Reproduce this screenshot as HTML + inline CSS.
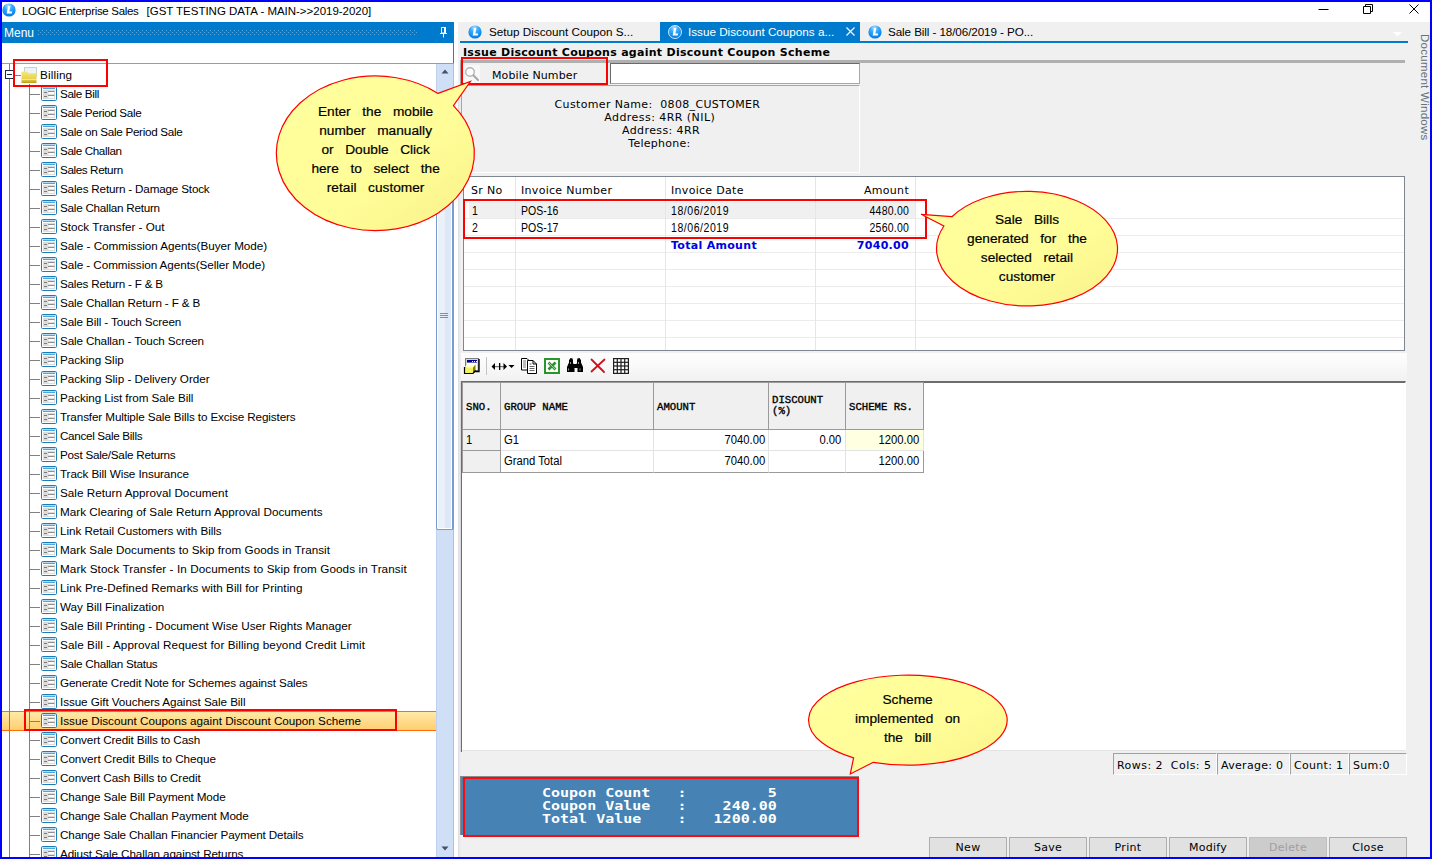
<!DOCTYPE html>
<html lang="en"><head><meta charset="utf-8"><title>LOGIC Enterprise Sales</title>
<style>
*{box-sizing:border-box}
html,body{margin:0;padding:0}
body{width:1432px;height:859px;position:relative;overflow:hidden;background:#f0f0f0;font-family:"Liberation Sans",sans-serif;font-size:11.5px;color:#000}
.abs{position:absolute}
.seg{font-family:"Liberation Sans",sans-serif;font-size:11.5px}
.ver{font-family:"DejaVu Sans","Liberation Sans",sans-serif;font-size:11px;letter-spacing:.3px;white-space:pre}
.nar{font-family:"Liberation Sans",sans-serif;font-size:12.5px;display:inline-block;transform:scaleX(.84);white-space:pre}
#frame{position:absolute;left:0;top:0;width:1432px;height:859px;border:2px solid #0000ff;z-index:50;pointer-events:none}
#title{position:absolute;left:2px;top:2px;width:1428px;height:20px;background:#fff}
#title .t{position:absolute;left:20px;top:0;line-height:19px;font-size:11.5px;white-space:pre}
#mhead{position:absolute;left:2px;top:22px;width:452px;height:21px;background:#007acc;color:#fff}
#mhead .t{position:absolute;left:2px;top:1px;line-height:21px;font-size:12px}
#mhead .dots{position:absolute;left:36px;top:8px;width:380px;height:6px;
 background-image:radial-gradient(circle at 0.5px 0.5px,#59a7dd 0.6px,transparent 0.8px),radial-gradient(circle at 2.5px 2.5px,#59a7dd 0.6px,transparent 0.8px);background-size:4px 4px}
#mband{position:absolute;left:2px;top:43px;width:452px;height:20px;background:#fff;border-right:1px solid #6d6d6d}
#treebg{position:absolute;left:2px;top:63px;width:452px;height:794px;background:#fff;border-top:1px solid #7da2ce}
#tree{position:absolute;left:0;top:0;width:436px;height:857px;overflow:hidden}
.ti{position:absolute;left:2px;width:434px;height:19px;line-height:20px;white-space:pre}
.ti span{position:absolute;left:58px;top:0;font-size:11.7px}
.ti .ic{position:absolute;left:39px;top:2px}
.ti .hl{position:absolute;left:27px;top:10px;width:11px;height:1px;background:#808080}
.ti.sel{height:20px;background:linear-gradient(#ffeaa6,#ffdb8c 50%,#ffcf6e);border-top:1px solid #ff6e0a;border-bottom:1px solid #ff6e0a}
.ti.sel span,.ti.sel .ic,.ti.sel .hl{margin-top:-1px}
.vl{position:absolute;width:1px;background:#808080;z-index:2}
.red{position:absolute;border:2px solid #ff0000;z-index:20}
#vsb{position:absolute;left:436px;top:64px;width:18px;height:793px;background:#cfdff5;border-left:1px solid #bfd1ee;border-right:1px solid #a9c1e6}
#vsb .th{position:absolute;left:-1px;top:38px;width:18px;height:428px;border:1px solid #7a9bcb;border-right-width:2px;border-radius:2px;box-shadow:inset 0 0 0 1px #fff;background:linear-gradient(90deg,#eaf1fb 0,#eaf1fb 50%,#dce8f7 50%,#dce8f7)}
#split{position:absolute;left:454px;top:22px;width:4px;height:835px;background:#fff}
/* right */
#tabs{position:absolute;left:458px;top:22px;width:972px;height:19px}
.tab{position:absolute;top:0;height:19px;line-height:20px;font-size:11.7px;white-space:pre}
.tab.act{background:#007acc;color:#fff}
#tline{position:absolute;left:460px;top:41px;width:948px;height:2px;background:#007acc}
#hd{position:absolute;left:463px;top:45px;line-height:15px;font-weight:bold;font-family:"DejaVu Sans",sans-serif;font-size:11px;letter-spacing:.28px;white-space:pre}
#gband{position:absolute;left:460px;top:60px;width:945px;height:3px;background:#b0b0b0}
.cal text{font-family:"Liberation Sans",sans-serif;font-size:13.7px;word-spacing:7.8px;text-anchor:middle;fill:#000;stroke:#000;stroke-width:.2px}
.btn{position:absolute;top:837px;width:78px;height:22px;background:#e1e1e1;border:1px solid #adadad;text-align:center;line-height:19px}
.btn.dis{color:#a0a0a0;background:#cccccc;border-color:#bfbfbf}
.st{position:absolute;top:753px;height:22px;border:1px solid;border-color:#a0a0a0 #fff #fff #a0a0a0;line-height:23px;padding-left:3px}
.gh{position:absolute;background:#f0f0f0;border-right:1px solid #9a9a9a;border-bottom:1px solid #9a9a9a;font:normal 10.67px "Liberation Mono",monospace;-webkit-text-stroke:.35px #000;white-space:pre;line-height:11px}
.gc{position:absolute;background:#fff;border-right:1px solid #e3e3e3;border-bottom:1px solid #e3e3e3;font-size:12.5px;line-height:20px;white-space:pre}
.gc.r{text-align:right}
.gc span{display:inline-block;transform:scaleX(.9)}

</style></head>
<body>
<svg width="0" height="0" style="position:absolute">
<defs>
<radialGradient id="lg" cx="0.45" cy="0.2" r="0.85"><stop offset="0" stop-color="#b4e2ff"/><stop offset="0.35" stop-color="#3aa9ff"/><stop offset="0.7" stop-color="#0f90f2"/><stop offset="1" stop-color="#0a6fd0"/></radialGradient>
<linearGradient id="fg" x1="0" y1="0" x2="0" y2="1"><stop offset="0" stop-color="#f7ea7a"/><stop offset="0.7" stop-color="#e6cf4a"/><stop offset="1" stop-color="#b89b1e"/></linearGradient>
<symbol id="logo" viewBox="0 0 14 14"><circle cx="7" cy="7" r="6.6" fill="url(#lg)"/><path d="M6 2.900 L8.300 2.900 L7.400 8.400 L10.200 8.400 L9.900 10.400 L4.700 10.400 Z" fill="#fff"/></symbol>
<symbol id="doc" viewBox="0 0 16 15"><rect x="0.5" y="0.5" width="15" height="14" rx="1.1" fill="#fff" stroke="#1b7db8"/><rect x="1" y="1" width="14" height="1" fill="#b5daf2"/><rect x="2" y="2" width="12" height="1" fill="#4da6dc"/><rect x="2" y="4" width="12" height="9" fill="#dcdcdc"/><rect x="3" y="6" width="3" height="1" fill="#7a7a7a"/><rect x="3" y="10" width="3" height="1" fill="#7a7a7a"/><rect x="7" y="5" width="6.500" height="1" fill="#8e8e8e"/><rect x="7.500" y="6" width="5.500" height="2" fill="#fff"/><rect x="7" y="9" width="6.500" height="1" fill="#8e8e8e"/><rect x="7.500" y="10" width="5.500" height="2" fill="#fff"/></symbol>
</defs></svg>
<div id="title">
 <svg class="abs" style="left:.3px;top:1px" width="14" height="14"><use href="#logo"/></svg>
 <div class="t" style="letter-spacing:-.31px">LOGIC Enterprise Sales  </div><div class="t" style="left:144.6px;letter-spacing:-.02px">[GST TESTING DATA - MAIN-&gt;&gt;2019-2020]</div>
 <svg class="abs" style="left:1310px;top:0" width="118" height="20" fill="none" stroke="#000" stroke-width="1">
  <path d="M6.5 7.5h10"/>
  <path d="M51.5 4.5h7v7h-7z M53.5 4.5v-2h7v7h-2" />
  <path d="M97.5 2.5l9 9M106.5 2.5l-9 9"/>
 </svg>
</div>
<div id="mhead"><div class="t">Menu</div><div class="dots"></div>
 <svg class="abs" style="left:438px;top:5px" width="8" height="11" fill="none" stroke="#fff" stroke-width="1"><path d="M1.500 0.500h4v5.500h-4z M0 6.500h7 M3.500 7v3.500"/><path d="M5 0v6.500" stroke-width="2"/></svg>
</div>
<div id="mband"></div>

<div id="treebg"></div>
<div id="tree">
<div class="vl" style="left:9px;top:64px;height:6px"></div>
<div class="vl" style="left:9px;top:79px;height:780px"></div>
<div class="vl" style="left:29px;top:84px;height:775px"></div>
<div class="abs" style="left:13px;top:75px;width:8px;height:1px;background:#808080"></div>
<div class="abs" style="left:5px;top:70px;width:9px;height:9px;border:1px solid #1c2a4a;background:#fff"></div>
<div class="abs" style="left:7px;top:74px;width:5px;height:1px;background:#1c2a4a"></div>
<svg class="abs" style="left:21px;top:67px" width="16" height="17"><rect x="3.5" y="0.5" width="12" height="9" fill="#eef3f7" stroke="#c9d2c8"/><path d="M0.5 16V5.5q0-1 1-1h4.2q.8 0 1.2 .7l.6 1h8v9.8z" fill="url(#fg)"/><rect x="0.5" y="12" width="15" height="1" fill="#f6ec9a" opacity=".8"/></svg>
<div class="abs seg" style="left:40px;top:65px;line-height:20px;font-size:11.7px;letter-spacing:.15px">Billing</div>
<div class="ti" style="top:84px"><i class="hl"></i><svg class="ic" width="16" height="15"><use href="#doc"/></svg><span style="letter-spacing:-0.354px">Sale Bill</span></div>
<div class="ti" style="top:103px"><i class="hl"></i><svg class="ic" width="16" height="15"><use href="#doc"/></svg><span style="letter-spacing:-0.359px">Sale Period Sale</span></div>
<div class="ti" style="top:122px"><i class="hl"></i><svg class="ic" width="16" height="15"><use href="#doc"/></svg><span style="letter-spacing:-0.315px">Sale on Sale Period Sale</span></div>
<div class="ti" style="top:141px"><i class="hl"></i><svg class="ic" width="16" height="15"><use href="#doc"/></svg><span style="letter-spacing:-0.389px">Sale Challan</span></div>
<div class="ti" style="top:160px"><i class="hl"></i><svg class="ic" width="16" height="15"><use href="#doc"/></svg><span style="letter-spacing:-0.398px">Sales Return</span></div>
<div class="ti" style="top:179px"><i class="hl"></i><svg class="ic" width="16" height="15"><use href="#doc"/></svg><span style="letter-spacing:-0.189px">Sales Return - Damage Stock</span></div>
<div class="ti" style="top:198px"><i class="hl"></i><svg class="ic" width="16" height="15"><use href="#doc"/></svg><span style="letter-spacing:-0.251px">Sale Challan Return</span></div>
<div class="ti" style="top:217px"><i class="hl"></i><svg class="ic" width="16" height="15"><use href="#doc"/></svg><span style="letter-spacing:-0.004px">Stock Transfer - Out</span></div>
<div class="ti" style="top:236px"><i class="hl"></i><svg class="ic" width="16" height="15"><use href="#doc"/></svg><span style="letter-spacing:-0.019px">Sale - Commission Agents(Buyer Mode)</span></div>
<div class="ti" style="top:255px"><i class="hl"></i><svg class="ic" width="16" height="15"><use href="#doc"/></svg><span style="letter-spacing:-0.059px">Sale - Commission Agents(Seller Mode)</span></div>
<div class="ti" style="top:274px"><i class="hl"></i><svg class="ic" width="16" height="15"><use href="#doc"/></svg><span style="letter-spacing:-0.215px">Sales Return - F &amp; B</span></div>
<div class="ti" style="top:293px"><i class="hl"></i><svg class="ic" width="16" height="15"><use href="#doc"/></svg><span style="letter-spacing:-0.151px">Sale Challan Return - F &amp; B</span></div>
<div class="ti" style="top:312px"><i class="hl"></i><svg class="ic" width="16" height="15"><use href="#doc"/></svg><span style="letter-spacing:-0.112px">Sale Bill - Touch Screen</span></div>
<div class="ti" style="top:331px"><i class="hl"></i><svg class="ic" width="16" height="15"><use href="#doc"/></svg><span style="letter-spacing:-0.147px">Sale Challan - Touch Screen</span></div>
<div class="ti" style="top:350px"><i class="hl"></i><svg class="ic" width="16" height="15"><use href="#doc"/></svg><span style="letter-spacing:-0.057px">Packing Slip</span></div>
<div class="ti" style="top:369px"><i class="hl"></i><svg class="ic" width="16" height="15"><use href="#doc"/></svg><span style="letter-spacing:-0.012px">Packing Slip - Delivery Order</span></div>
<div class="ti" style="top:388px"><i class="hl"></i><svg class="ic" width="16" height="15"><use href="#doc"/></svg><span style="letter-spacing:-0.07px">Packing List from Sale Bill</span></div>
<div class="ti" style="top:407px"><i class="hl"></i><svg class="ic" width="16" height="15"><use href="#doc"/></svg><span style="letter-spacing:-0.117px">Transfer Multiple Sale Bills to Excise Registers</span></div>
<div class="ti" style="top:426px"><i class="hl"></i><svg class="ic" width="16" height="15"><use href="#doc"/></svg><span style="letter-spacing:-0.325px">Cancel Sale Bills</span></div>
<div class="ti" style="top:445px"><i class="hl"></i><svg class="ic" width="16" height="15"><use href="#doc"/></svg><span style="letter-spacing:-0.245px">Post Sale/Sale Returns</span></div>
<div class="ti" style="top:464px"><i class="hl"></i><svg class="ic" width="16" height="15"><use href="#doc"/></svg><span style="letter-spacing:-0.105px">Track Bill Wise Insurance</span></div>
<div class="ti" style="top:483px"><i class="hl"></i><svg class="ic" width="16" height="15"><use href="#doc"/></svg><span style="letter-spacing:0.033px">Sale Return Approval Document</span></div>
<div class="ti" style="top:502px"><i class="hl"></i><svg class="ic" width="16" height="15"><use href="#doc"/></svg><span style="letter-spacing:0.02px">Mark Clearing of Sale Return Approval Documents</span></div>
<div class="ti" style="top:521px"><i class="hl"></i><svg class="ic" width="16" height="15"><use href="#doc"/></svg><span style="letter-spacing:-0.043px">Link Retail Customers with Bills</span></div>
<div class="ti" style="top:540px"><i class="hl"></i><svg class="ic" width="16" height="15"><use href="#doc"/></svg><span style="letter-spacing:0.022px">Mark Sale Documents to Skip from Goods in Transit</span></div>
<div class="ti" style="top:559px"><i class="hl"></i><svg class="ic" width="16" height="15"><use href="#doc"/></svg><span style="letter-spacing:0.09px">Mark Stock Transfer - In Documents to Skip from Goods in Transit</span></div>
<div class="ti" style="top:578px"><i class="hl"></i><svg class="ic" width="16" height="15"><use href="#doc"/></svg><span style="letter-spacing:0.059px">Link Pre-Defined Remarks with Bill for Printing</span></div>
<div class="ti" style="top:597px"><i class="hl"></i><svg class="ic" width="16" height="15"><use href="#doc"/></svg><span style="letter-spacing:0.003px">Way Bill Finalization</span></div>
<div class="ti" style="top:616px"><i class="hl"></i><svg class="ic" width="16" height="15"><use href="#doc"/></svg><span style="letter-spacing:0.001px">Sale Bill Printing - Document Wise User Rights Manager</span></div>
<div class="ti" style="top:635px"><i class="hl"></i><svg class="ic" width="16" height="15"><use href="#doc"/></svg><span style="letter-spacing:0.081px">Sale Bill - Approval Request for Billing beyond Credit Limit</span></div>
<div class="ti" style="top:654px"><i class="hl"></i><svg class="ic" width="16" height="15"><use href="#doc"/></svg><span style="letter-spacing:-0.275px">Sale Challan Status</span></div>
<div class="ti" style="top:673px"><i class="hl"></i><svg class="ic" width="16" height="15"><use href="#doc"/></svg><span style="letter-spacing:-0.126px">Generate Credit Note for Schemes against Sales</span></div>
<div class="ti" style="top:692px"><i class="hl"></i><svg class="ic" width="16" height="15"><use href="#doc"/></svg><span style="letter-spacing:-0.081px">Issue Gift Vouchers Against Sale Bill</span></div>
<div class="ti sel" style="top:711px"><i class="hl"></i><svg class="ic" width="16" height="15"><use href="#doc"/></svg><span style="letter-spacing:0.004px">Issue Discount Coupons againt Discount Coupon Scheme</span></div>
<div class="ti" style="top:730px"><i class="hl"></i><svg class="ic" width="16" height="15"><use href="#doc"/></svg><span style="letter-spacing:-0.121px">Convert Credit Bills to Cash</span></div>
<div class="ti" style="top:749px"><i class="hl"></i><svg class="ic" width="16" height="15"><use href="#doc"/></svg><span style="letter-spacing:-0.045px">Convert Credit Bills to Cheque</span></div>
<div class="ti" style="top:768px"><i class="hl"></i><svg class="ic" width="16" height="15"><use href="#doc"/></svg><span style="letter-spacing:-0.106px">Convert Cash Bills to Credit</span></div>
<div class="ti" style="top:787px"><i class="hl"></i><svg class="ic" width="16" height="15"><use href="#doc"/></svg><span style="letter-spacing:-0.092px">Change Sale Bill Payment Mode</span></div>
<div class="ti" style="top:806px"><i class="hl"></i><svg class="ic" width="16" height="15"><use href="#doc"/></svg><span style="letter-spacing:-0.117px">Change Sale Challan Payment Mode</span></div>
<div class="ti" style="top:825px"><i class="hl"></i><svg class="ic" width="16" height="15"><use href="#doc"/></svg><span style="letter-spacing:-0.148px">Change Sale Challan Financier Payment Details</span></div>
<div class="ti" style="top:844px"><i class="hl"></i><svg class="ic" width="16" height="15"><use href="#doc"/></svg><span style="letter-spacing:-0.109px">Adjust Sale Challan against Returns</span></div>
</div>
<div class="red" style="left:13px;top:59px;width:95px;height:28px"></div>
<div class="red" style="left:24px;top:709px;width:373px;height:22px"></div>
<div id="vsb"><div class="th"></div>
<svg class="abs" style="left:4px;top:5px" width="9" height="5"><path d="M0.500 4.500L4 0.500L7.500 4.500z" fill="#45516b"/></svg>
<svg class="abs" style="left:4px;top:782px" width="9" height="5"><path d="M0.500 0.500L4 4.500L7.500 0.500z" fill="#45516b"/></svg>
<div class="abs" style="left:3px;top:249px;width:8px;height:1px;background:#6f8fc0;box-shadow:0 2px #6f8fc0,0 4px #6f8fc0"></div>
</div>
<div id="split"></div>
<div class="abs" style="left:458px;top:85px;width:3px;height:772px;background:linear-gradient(90deg,#dadae0,#e9e9ed 50%,#f0f0f0)"></div>
<!-- tabs -->
<div id="tabs">
 <div class="tab" style="left:0;width:202px"><svg class="abs" style="left:10px;top:3px" width="14" height="14"><use href="#logo"/></svg><span class="abs" style="left:31px">Setup Discount Coupon S...</span></div>
 <div class="tab act" style="left:202px;width:200px"><svg class="abs" style="left:8px;top:3px" width="14" height="14"><use href="#logo"/><circle cx="7" cy="7" r="6.5" fill="none" stroke="#fff" stroke-width=".8"/></svg><span class="abs" style="left:28px">Issue Discount Coupons a...</span>
  <svg class="abs" style="left:186px;top:5px" width="9" height="9" stroke="#fff" stroke-width="1.1" fill="none"><path d="M0.5 0.5l8 8M8.5 0.5l-8 8"/></svg></div>
 <div class="tab" style="left:402px;width:200px"><svg class="abs" style="left:8px;top:3px" width="14" height="14"><use href="#logo"/></svg><span class="abs" style="left:28px;letter-spacing:-.1px">Sale Bill - 18/06/2019 - PO...</span></div>
 <svg class="abs" style="left:935px;top:10px" width="9" height="5"><path d="M0 0h9L4.5 4.5z" fill="#fff"/></svg>
</div>
<div id="tline"></div>
<div class="abs" style="left:1419px;top:33px;width:12px;height:110px;overflow:visible"><div style="position:absolute;left:12px;top:1px;transform-origin:0 0;transform:rotate(90deg);white-space:pre;font-size:11.5px;letter-spacing:.27px;color:#66707e;line-height:12px">Document Windows</div></div>
<div id="hd">Issue Discount Coupons againt Discount Coupon Scheme</div>
<div id="gband"></div>
<!-- search row -->
<div class="abs" style="left:463px;top:65px;width:17px;height:18px;background:#f8f8f8"></div>
<svg class="abs" style="left:464px;top:66px" width="16" height="16" fill="none"><circle cx="6" cy="6" r="4.3" stroke="#b4b4b4" stroke-width="1.4" fill="#fdfdfd"/><path d="M9.3 9.3L14 14" stroke="#a8a8a8" stroke-width="2" stroke-linecap="round"/></svg>
<div class="abs ver" style="left:492px;top:69px;line-height:14px;letter-spacing:.12px">Mobile Number</div>
<div class="abs" style="left:610px;top:63px;width:250px;height:21px;background:#fff;border:1px solid;border-color:#6a6a6a #a8a8a8 #a8a8a8 #6a6a6a"></div>
<div class="red" style="left:461px;top:57px;width:147px;height:28px"></div>
<div class="abs" style="left:460px;top:63px;width:1px;height:22px;background:#a6a6a6"></div>
<!-- customer panel -->
<div class="abs" style="left:461px;top:85px;width:399px;height:88px;border:1px solid;border-color:#a6a6a6 #fff #fff #a6a6a6"></div>
<div class="abs ver" style="left:554.6px;top:98px;line-height:13px;letter-spacing:.345px">Customer Name:  0808_CUSTOMER</div>
<div class="abs ver" style="left:604.2px;top:111px;line-height:13px;letter-spacing:.45px">Address: 4RR (NIL)</div>
<div class="abs ver" style="left:622px;top:124px;line-height:13px;letter-spacing:.4px">Address: 4RR</div>
<div class="abs ver" style="left:628.3px;top:137px;line-height:13px;letter-spacing:.27px">Telephone: </div>
<!-- invoice list -->
<div class="abs" style="left:463px;top:176px;width:942px;height:175px;background:#fff;border:1px solid #7f8692"></div>
<div class="abs" style="left:469px;top:202px;width:446px;height:16px;background:#f0f0f0"></div>
<div class="abs" style="left:464px;top:202px;width:940px;height:136px;background:repeating-linear-gradient(transparent 0,transparent 16px,#ececec 16px,#ececec 17px)"></div>
<div class="abs" style="left:515px;top:177px;width:1px;height:173px;background:#e6e6e6"></div>
<div class="abs" style="left:665px;top:177px;width:1px;height:173px;background:#e6e6e6"></div>
<div class="abs" style="left:815px;top:177px;width:1px;height:173px;background:#e6e6e6"></div>
<div class="abs" style="left:915px;top:177px;width:1px;height:173px;background:#e6e6e6"></div>
<div class="abs ver" style="left:471px;top:184px;line-height:14px">Sr No</div>
<div class="abs ver" style="left:521px;top:184px;line-height:14px">Invoice Number</div>
<div class="abs ver" style="left:671px;top:184px;line-height:14px">Invoice Date</div>
<div class="abs ver" style="left:815px;top:184px;width:94px;text-align:right;line-height:14px">Amount</div>
<div class="abs" style="left:472px;top:204px;line-height:15px"><span class="nar" style="transform-origin:0 50%">1</span></div>
<div class="abs" style="left:521px;top:204px;line-height:15px"><span class="nar" style="transform-origin:0 50%">POS-16</span></div>
<div class="abs" style="left:671px;top:204px;line-height:15px"><span class="nar" style="transform-origin:0 50%;letter-spacing:.66px">18/06/2019</span></div>
<div class="abs" style="left:815px;top:204px;width:94px;text-align:right;line-height:15px"><span class="nar" style="transform-origin:100% 50%;letter-spacing:.26px;margin-right:-.26px">4480.00</span></div>
<div class="abs" style="left:472px;top:221px;line-height:15px"><span class="nar" style="transform-origin:0 50%">2</span></div>
<div class="abs" style="left:521px;top:221px;line-height:15px"><span class="nar" style="transform-origin:0 50%">POS-17</span></div>
<div class="abs" style="left:671px;top:221px;line-height:15px"><span class="nar" style="transform-origin:0 50%;letter-spacing:.66px">18/06/2019</span></div>
<div class="abs" style="left:815px;top:221px;width:94px;text-align:right;line-height:15px"><span class="nar" style="transform-origin:100% 50%;letter-spacing:.26px;margin-right:-.26px">2560.00</span></div>
<div class="abs ver" style="left:671px;top:239px;line-height:14px;font-weight:bold;color:#0000e0">Total Amount</div>
<div class="abs ver" style="left:815px;top:239px;width:94px;text-align:right;line-height:14px;font-weight:bold;color:#0000e0">7040.00</div>
<div class="red" style="left:463px;top:199px;width:464px;height:40px"></div>
<!-- toolbar -->
<div class="abs" style="left:461px;top:353px;width:946px;height:28px;background:linear-gradient(#fdfdfd,#fafafa 40%,#f1f1f1)"></div>
<svg class="abs" style="left:460px;top:354px" width="180" height="24" viewBox="460 354 180 24">
 <!-- window with yellow box -->
 <rect x="465.5" y="358.500" width="13" height="12" fill="#d4d4d4" stroke="#808080"/><rect x="467" y="363" width="10" height="7" fill="#fff"/><path d="M479 359v12.500h-13" fill="none" stroke="#000" stroke-width="1.400"/>
 <rect x="467" y="360" width="10" height="2.500" fill="#00008b"/><rect x="472" y="361" width="1" height="1" fill="#fff"/><rect x="474" y="361" width="1" height="1" fill="#fff"/><rect x="476" y="361" width="1" height="1" fill="#fff"/>
 <path d="M464.500 367.500l2.500-3h8.500l-2.500 3z" fill="#ffffc8"/><rect x="464.500" y="367.500" width="8.500" height="6" fill="#f2f260"/><path d="M473 367.500l2.500-3v6l-2.500 3z" fill="#808000"/><path d="M464.500 367v6.500h8.500l2.500-3" fill="none" stroke="#000" stroke-width="1.200"/>
 <rect x="486" y="357" width="1" height="18" fill="#c4c4c4"/>
 <!-- arrows -->
 <rect x="494" y="366" width="10" height="1.200" fill="#777"/><path d="M491.500 366.500l3.500-3.500v7zM507 366.500l-3.500-3.500v7z" fill="#000"/><rect x="499" y="363" width="1.300" height="7" fill="#000"/><path d="M508.500 365h6l-3 3z" fill="#000"/>
 <!-- copy -->
 <path d="M521.500 358.500h5.500l2 2v9.500h-7.500z" fill="#fff" stroke="#000"/><path d="M523 361h3M523 363h3M523 365h3M523 367h3" stroke="#666" stroke-width=".9"/>
 <path d="M527.500 360.500h5.500l3.500 3.500v9.500h-9z" fill="#fff" stroke="#000"/><path d="M533 360.500v3.500h3.500" fill="none" stroke="#000"/><path d="M529.500 364h2M529.500 366.500h5M529.500 368.500h5M529.500 370.500h5" stroke="#555" stroke-width=".9"/>
 <!-- excel -->
 <rect x="545" y="359" width="14" height="14" fill="#fff" stroke="#2a952a" stroke-width="2"/><path d="M548.500 362.500l7 7M555.500 362.500l-7 7" stroke="#2a952a" stroke-width="2.600"/><path d="M548.500 362.500l7 7" stroke="#cfe8cf" stroke-width=".7"/>
 <!-- binoculars -->
 <path d="M567 372v-5l2-4.500v-3h1v-1.200h2.500v1.200h.5v3.500l.5 1h3l.5-1v-3.500h.5v-1.200h2.500v1.200h1v3l2 4.500v5h-5.500v-4h-3v4z" fill="#000"/><path d="M568.500 368.500v2M580 368.500v2M570.500 362v2M578.500 362v2" stroke="#bbb" stroke-width=".8"/>
 <!-- red x -->
 <path d="M591.500 359.500l12.500 12.500M604.500 359.500l-13 12" stroke="#d0101c" stroke-width="1.800" stroke-linecap="round" fill="none"/>
 <!-- grid -->
 <rect x="613" y="358" width="16" height="16" fill="#1e1e1e"/><g fill="#fff"><rect x="614.2" y="359.2" width="2.5" height="2.5"/><rect x="617.9" y="359.2" width="2.5" height="2.5"/><rect x="621.6" y="359.2" width="2.5" height="2.5"/><rect x="625.3" y="359.2" width="2.5" height="2.5"/><rect x="614.2" y="362.9" width="2.5" height="2.5"/><rect x="617.9" y="362.9" width="2.5" height="2.5"/><rect x="621.6" y="362.9" width="2.5" height="2.5"/><rect x="625.3" y="362.9" width="2.5" height="2.5"/><rect x="614.2" y="366.6" width="2.5" height="2.5"/><rect x="617.9" y="366.6" width="2.5" height="2.5"/><rect x="621.6" y="366.6" width="2.5" height="2.5"/><rect x="625.3" y="366.6" width="2.5" height="2.5"/><rect x="614.2" y="370.3" width="2.5" height="2.5"/><rect x="617.9" y="370.3" width="2.5" height="2.5"/><rect x="621.6" y="370.3" width="2.5" height="2.5"/><rect x="625.3" y="370.3" width="2.5" height="2.5"/></g>
</svg>
<!-- lower grid panel -->
<div class="abs" style="left:459px;top:381px;width:3px;height:371px;background:linear-gradient(90deg,#f0f0f0,#d8d8dc 50%,#6d6d6d 67%)"></div>
<div class="abs" style="left:462px;top:381px;width:944px;height:370px;background:#fff;border:1px solid;border-color:#6d6d6d #fff #e3e3e3 #6d6d6d;border-left:0;border-top-width:2px"></div>
<div class="abs" style="left:462px;top:382px;width:462px;height:91px;background:#9a9a9a"></div>
<div class="gh" style="left:463px;top:383px;width:38px;height:47px;padding:19px 0 0 3px">SNO.</div>
<div class="gh" style="left:501px;top:383px;width:153px;height:47px;padding:19px 0 0 3px">GROUP NAME</div>
<div class="gh" style="left:654px;top:383px;width:115px;height:47px;padding:19px 0 0 3px">AMOUNT</div>
<div class="gh" style="left:769px;top:383px;width:77px;height:47px;padding:12px 0 0 3px">DISCOUNT
(%)</div>
<div class="gh" style="left:846px;top:383px;width:78px;height:47px;padding:19px 0 0 3px">SCHEME RS.</div>
<div class="gc" style="left:463px;top:430px;width:38px;height:21px;background:#f0f0f0;border-color:#9a9a9a;padding-left:3px"><span style="transform-origin:0 50%">1</span></div>
<div class="gc" style="left:501px;top:430px;width:153px;height:21px;padding-left:3px"><span style="transform-origin:0 50%">G1</span></div>
<div class="gc r" style="left:654px;top:430px;width:115px;height:21px;padding-right:3px"><span style="transform-origin:100% 50%">7040.00</span></div>
<div class="gc r" style="left:769px;top:430px;width:77px;height:21px;padding-right:4px"><span style="transform-origin:100% 50%">0.00</span></div>
<div class="gc r" style="left:846px;top:430px;width:78px;height:21px;padding-right:4px;background:#ffffe1"><span style="transform-origin:100% 50%">1200.00</span></div>
<div class="gc" style="left:463px;top:451px;width:38px;height:22px;background:#f0f0f0;border-color:#9a9a9a"></div>
<div class="gc" style="left:501px;top:451px;width:153px;height:22px;padding-left:3px;border-bottom-color:#9a9a9a"><span style="transform-origin:0 50%">Grand Total</span></div>
<div class="gc r" style="left:654px;top:451px;width:115px;height:22px;padding-right:3px;border-bottom-color:#9a9a9a"><span style="transform-origin:100% 50%">7040.00</span></div>
<div class="gc r" style="left:769px;top:451px;width:77px;height:22px;padding-right:4px;border-bottom-color:#9a9a9a"></div>
<div class="gc r" style="left:846px;top:451px;width:78px;height:22px;padding-right:4px;border-color:#9a9a9a"><span style="transform-origin:100% 50%">1200.00</span></div>
<!-- status cells -->
<div class="st ver" style="left:1113px;width:104px;letter-spacing:.45px">Rows: 2  Cols: 5</div>
<div class="st ver" style="left:1217px;width:73px">Average: 0</div>
<div class="st ver" style="left:1290px;width:59px">Count: 1</div>
<div class="st ver" style="left:1349px;width:58px">Sum:0</div>
<!-- coupon panel -->
<div class="abs" style="left:460px;top:776px;width:399px;height:59px;background:#4682b4;border-left:1px solid #8a8a8a;border-top:1px solid #8a8a8a"></div>
<div class="red" style="left:463px;top:777px;width:396px;height:60px;border-color:#fb0a12"></div>
<div class="abs" style="left:542px;top:776px;color:#fff;font:bold 15px 'DejaVu Sans Mono','Liberation Mono',monospace;white-space:pre">
<div class="abs" style="left:0;top:9px;line-height:18px;transform:scaleY(.84);transform-origin:0 0">Coupon Count   :         5</div>
<div class="abs" style="left:0;top:22px;line-height:18px;transform:scaleY(.84);transform-origin:0 0">Coupon Value   :    240.00</div>
<div class="abs" style="left:0;top:35px;line-height:18px;transform:scaleY(.84);transform-origin:0 0">Total Value    :   1200.00</div>
</div>
<!-- buttons -->
<div class="btn ver" style="left:929px">New</div>
<div class="btn ver" style="left:1009px">Save</div>
<div class="btn ver" style="left:1089px">Print</div>
<div class="btn ver" style="left:1169px">Modify</div>
<div class="btn ver dis" style="left:1249px">Delete</div>
<div class="btn ver" style="left:1329px">Close</div>
<!-- callouts -->
<svg class="abs cal" style="left:0;top:0;z-index:30" width="1432" height="859">
 <defs><linearGradient id="yg" x1="0" y1="0" x2="1" y2="1"><stop offset="0" stop-color="#ffff9e"/><stop offset=".6" stop-color="#fffd98"/><stop offset="1" stop-color="#f8f088"/></linearGradient></defs>
 <path d="M438.0 93.4L470.4 81.5L453.4 105.7A99 77.3 0 1 1 438.0 93.4Z" fill="url(#yg)" stroke="#ff0000" stroke-width="1.200"/>
 <text x="375.600" y="116">Enter the mobile</text>
 <text x="375.600" y="135">number manually</text>
 <text x="375.600" y="154">or Double Click</text>
 <text x="375.600" y="173">here to select the</text>
 <text x="375.600" y="192">retail customer</text>
 <path d="M951.9 216.7L921.0 214.3L943.9 226.0A90.5 57.3 0 1 0 951.9 216.7Z" fill="url(#yg)" stroke="#ff0000" stroke-width="1.200"/>
 <text x="1027" y="224">Sale Bills</text>
 <text x="1027" y="243">generated for the</text>
 <text x="1027" y="262">selected retail</text>
 <text x="1027" y="281">customer</text>
 <path d="M873.3 762.3L850.3 774.0L853.6 757.8A99.3 45 0 1 1 873.3 762.3Z" fill="url(#yg)" stroke="#ff0000" stroke-width="1.200"/>
 <text x="907.600" y="704">Scheme</text>
 <text x="907.600" y="723">implemented on</text>
 <text x="907.600" y="742">the bill</text>
</svg>
<div id="frame"></div>

</body></html>
